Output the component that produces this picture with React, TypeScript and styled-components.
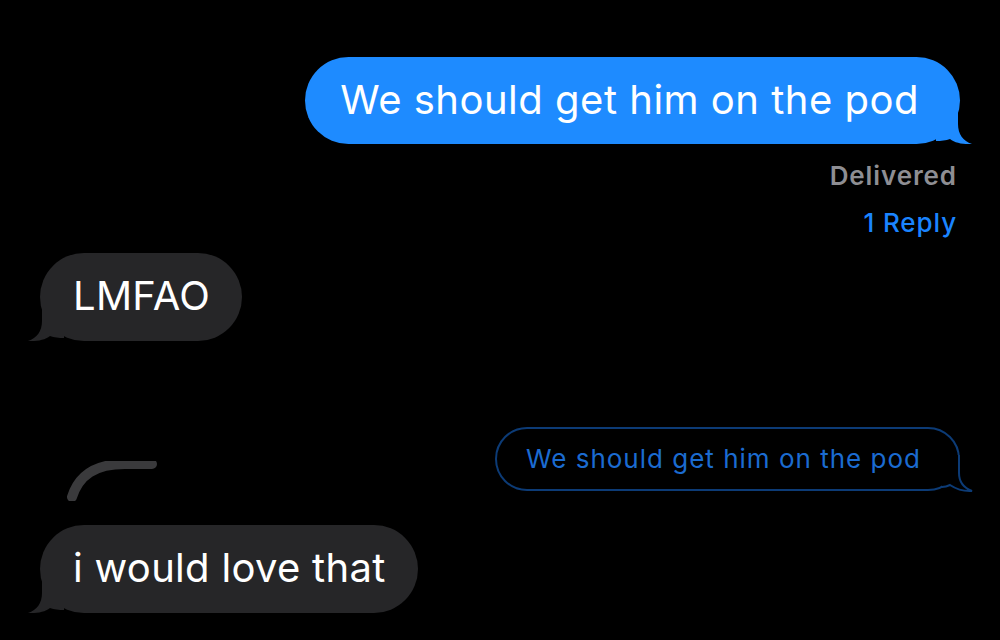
import React from "react";
import styled, { createGlobalStyle, css } from "styled-components";

const GlobalStyle = createGlobalStyle`
  html, body {
    margin: 0;
    padding: 0;
    background: #000000;
  }
  body {
    font-family: Inter, "Noto Sans", "Liberation Sans", sans-serif;
    -webkit-font-smoothing: antialiased;
  }
`;

const Screen = styled.div`
  width: 1000px;
  height: 640px;
  background: #000;
  overflow: hidden;
  box-sizing: border-box;
  padding: 57px 40px 0 40px;
  display: flex;
  flex-direction: column;
`;

type BubbleProps = {
  variant: "sent" | "received" | "quote";
};

const Bubble = styled.div<BubbleProps>`
  position: relative;
  box-sizing: border-box;
  display: flex;
  align-items: center;
  white-space: nowrap;

  ${(p) =>
    p.variant === "sent" &&
    css`
      align-self: flex-end;
      height: 87px;
      border-radius: 44px;
      padding: 0 41px 3px 35px;
      background: #1e8bff;
      color: #ffffff;
      font-size: 40px;
      letter-spacing: 0.5px;
    `}

  ${(p) =>
    p.variant === "received" &&
    css`
      align-self: flex-start;
      height: 88px;
      border-radius: 44px;
      padding: 0 32px 3px 33px;
      background: #262628;
      color: #ffffff;
      font-size: 40px;
      letter-spacing: 0.3px;
    `}

  ${(p) =>
    p.variant === "quote" &&
    css`
      height: 64px;
      border-radius: 32px;
      padding: 0 37px 2px 29px;
      border: 2px solid #0c3b76;
      background: #000;
      color: #1b6bd0;
      font-size: 26px;
      letter-spacing: 1px;
    `}
`;

const TailSvg = styled.svg<{ $side: "left" | "right"; $offset: number }>`
  position: absolute;
  bottom: ${(p) => -p.$offset}px;
  ${(p) =>
    p.$side === "right"
      ? css`
          right: ${-12 - p.$offset}px;
        `
      : css`
          left: -12px;
          transform: scaleX(-1);
        `}
  overflow: visible;
`;

const SolidTail = ({ side, color }: { side: "left" | "right"; color: string }) => (
  <TailSvg $side={side} $offset={0} width="36" height="46" viewBox="0 0 36 46">
    <path
      d="M22 0 L22 26 C22 36 27 43 36 46 C27 46.5 19 45 14 41 C10 42.5 5 43 0 43 L0 0 Z"
      fill={color}
    />
  </TailSvg>
);

const OutlineTail = ({ color }: { color: string }) => (
  <TailSvg $side="right" $offset={2} width="30" height="36" viewBox="0 0 30 36">
    <path
      d="M17 0 L17 18 C17 27 22 33 30 36 C22 36.5 14 34 8 30 C5 31.5 3 32 0 32 L0 0 Z"
      fill="#000"
    />
    <path
      d="M17 0 L17 18 C17 27 22 33 30 36 C22 36.5 14 34 8 30 C5 31.5 3 32 0 32"
      fill="none"
      stroke={color}
      strokeWidth="2"
    />
  </TailSvg>
);

const Status = styled.div<{ tone: "muted" | "link" }>`
  align-self: flex-end;
  margin-right: 3px;
  font-size: 26px;
  line-height: 30px;
  letter-spacing: 0.9px;
  font-weight: ${(p) => (p.tone === "muted" ? 600 : 500)};
  color: ${(p) => (p.tone === "muted" ? "#8e8e93" : "#1a84ff")};
`;

const QuoteRow = styled.div`
  display: flex;
  justify-content: space-between;
  align-items: flex-start;
  margin-top: 86px;
`;

const Connector = styled.svg`
  margin-left: 25px;
  margin-top: 34px;
  flex-shrink: 0;
`;

const ReplyLine = () => (
  <Connector width="95" height="40" viewBox="0 0 95 40">
    <path
      d="M7 36 C14 14 30 3 60 3 L87 3"
      fill="none"
      stroke="#3a3a3c"
      strokeWidth="10"
      strokeLinecap="round"
    />
  </Connector>
);

const Spacer = styled.div<{ h: number }>`
  height: ${(p) => p.h}px;
  flex-shrink: 0;
`;

const App = () => {
  return (
    <>
      <GlobalStyle />
      <Screen>
        <Bubble variant="sent">
          We should get him on the pod
          <SolidTail side="right" color="#1e8bff" />
        </Bubble>
        <Spacer h={17} />
        <Status tone="muted">Delivered</Status>
        <Spacer h={17} />
        <Status tone="link">1 Reply</Status>
        <Spacer h={15} />
        <Bubble variant="received">
          LMFAO
          <SolidTail side="left" color="#262628" />
        </Bubble>
        <QuoteRow>
          <ReplyLine />
          <Bubble variant="quote">
            We should get him on the pod
            <OutlineTail color="#0c3b76" />
          </Bubble>
        </QuoteRow>
        <Spacer h={24} />
        <Bubble variant="received">
          i would love that
          <SolidTail side="left" color="#262628" />
        </Bubble>
      </Screen>
    </>
  );
};

export default App;
